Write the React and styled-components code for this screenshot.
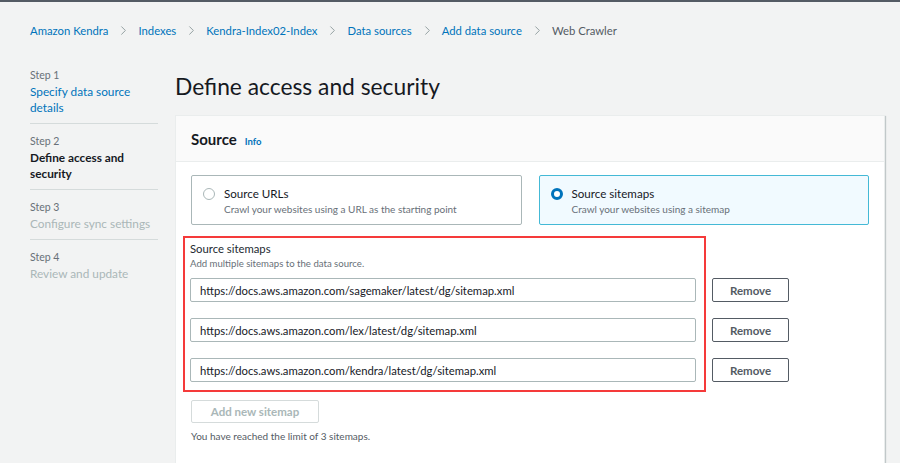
import React from 'react'
import styled, { createGlobalStyle } from 'styled-components'
import { ChevronRight } from 'lucide-react'

const GlobalStyle = createGlobalStyle`
  body {
    margin: 0;
    background: #f2f3f3;
    font-family: Lato, "Noto Sans", sans-serif;
    color: #16191f;
  }
`

const crumbs = ['Amazon Kendra', 'Indexes', 'Kendra-Index02-Index', 'Data sources', 'Add data source']

const steps = [
  { label: 'Step 1', title: 'Specify data source details', state: 'done' },
  { label: 'Step 2', title: 'Define access and security', state: 'current' },
  { label: 'Step 3', title: 'Configure sync settings', state: 'todo' },
  { label: 'Step 4', title: 'Review and update', state: 'todo' },
]

const sitemaps = [
  'https://docs.aws.amazon.com/sagemaker/latest/dg/sitemap.xml',
  'https://docs.aws.amazon.com/lex/latest/dg/sitemap.xml',
  'https://docs.aws.amazon.com/kendra/latest/dg/sitemap.xml',
]

export default function App() {
  return (
    <Page>
      <GlobalStyle />
      <TopBar />
      <Breadcrumbs>
        {crumbs.map((c) => (
          <React.Fragment key={c}>
            <Crumb>{c}</Crumb>
            <Sep><ChevronRight size={15} strokeWidth={1.4} /></Sep>
          </React.Fragment>
        ))}
        <Crumb $current>Web Crawler</Crumb>
      </Breadcrumbs>

      <Layout>
        <Sidebar>
          {steps.map((s) => (
            <Step key={s.label}>
              <StepLabel>{s.label}</StepLabel>
              <StepTitle $state={s.state}>{s.title}</StepTitle>
            </Step>
          ))}
        </Sidebar>

        <Main>
          <Title>Define access and security</Title>
          <Panel>
            <PanelHeader>
              <PanelTitle>Source</PanelTitle>
              <Info>Info</Info>
            </PanelHeader>
            <PanelBody>
              <Tiles>
                <Tile>
                  <Radio />
                  <TileText>
                    <TileTitle>Source URLs</TileTitle>
                    <TileDesc>Crawl your websites using a URL as the starting point</TileDesc>
                  </TileText>
                </Tile>
                <Tile $selected>
                  <Radio $checked />
                  <TileText>
                    <TileTitle>Source sitemaps</TileTitle>
                    <TileDesc>Crawl your websites using a sitemap</TileDesc>
                  </TileText>
                </Tile>
              </Tiles>

              <FieldRow>
                <Highlight>
                  <FieldLabel>Source sitemaps</FieldLabel>
                  <FieldDesc>Add multiple sitemaps to the data source.</FieldDesc>
                  <Inputs>
                    {sitemaps.map((url) => (
                      <Input key={url} readOnly value={url} />
                    ))}
                  </Inputs>
                </Highlight>
                <Buttons>
                  {sitemaps.map((url) => (
                    <RemoveButton key={url}>Remove</RemoveButton>
                  ))}
                </Buttons>
              </FieldRow>

              <AddButton disabled>Add new sitemap</AddButton>
              <Hint>You have reached the limit of 3 sitemaps.</Hint>
            </PanelBody>
          </Panel>
        </Main>
      </Layout>
    </Page>
  )
}

const Page = styled.div`
  width: 900px;
  height: 463px;
  overflow: hidden;
`

const TopBar = styled.div`
  height: 2px;
  background: #545b64;
`

const Breadcrumbs = styled.nav`
  display: flex;
  align-items: center;
  height: 16px;
  padding: 20px 0 0 30px;
  font-size: 11.3px;
`

const Crumb = styled.span`
  color: ${(p) => (p.$current ? '#545b64' : '#0073bb')};
  white-space: nowrap;
`

const Sep = styled.span`
  display: flex;
  color: #879596;
  margin: 0 7px 0 8px;
`

const Layout = styled.div`
  display: flex;
  margin-top: 30px;
`

const Sidebar = styled.aside`
  width: 128px;
  margin-left: 30px;
  flex-shrink: 0;
`

const Step = styled.div`
  padding: 10px 0 7px;
  border-bottom: 1px solid #d5dbdb;
  &:first-child {
    padding-top: 0;
  }
  &:last-child {
    border-bottom: none;
  }
`

const StepLabel = styled.div`
  font-size: 10.5px;
  line-height: 14px;
  color: #687078;
  margin-bottom: 2px;
`

const StepTitle = styled.div`
  font-size: 11.8px;
  line-height: 16px;
  color: ${(p) => (p.$state === 'done' ? '#0073bb' : p.$state === 'current' ? '#16191f' : '#aab7b8')};
  font-weight: ${(p) => (p.$state === 'current' ? 700 : 400)};
`

const Main = styled.main`
  margin-left: 17px;
  width: 710px;
`

const Title = styled.h1`
  margin: 0 0 15px;
  padding-top: 4px;
  font-size: 22.8px;
  font-weight: 400;
  line-height: 28px;
  color: #16191f;
`

const Panel = styled.section`
  background: #fff;
  border: 1px solid #eaeded;
  box-shadow: 1px 1px 1px 0 rgba(0, 28, 36, 0.2);
  height: 360px;
`

const PanelHeader = styled.header`
  display: flex;
  align-items: baseline;
  gap: 8px;
  height: 46px;
  box-sizing: border-box;
  padding: 14px 15px 0;
  background: #fafafa;
  border-bottom: 1px solid #eaeded;
`

const PanelTitle = styled.h2`
  margin: 0;
  font-size: 15px;
  font-weight: 700;
`

const Info = styled.span`
  font-size: 9.5px;
  font-weight: 700;
  color: #0073bb;
`

const PanelBody = styled.div`
  padding: 13px 15px 0;
`

const Tiles = styled.div`
  display: grid;
  grid-template-columns: 1fr 1fr;
  gap: 17px;
`

const Tile = styled.div`
  display: flex;
  align-items: flex-start;
  gap: 9px;
  height: 50px;
  box-sizing: border-box;
  padding: 10px 11px 0;
  border: 1px solid ${(p) => (p.$selected ? '#44b9d6' : '#aab7b8')};
  background: ${(p) => (p.$selected ? '#f1faff' : '#fff')};
  border-radius: 2px;
`

const Radio = styled.span`
  width: ${(p) => (p.$checked ? '6px' : '10px')};
  height: ${(p) => (p.$checked ? '6px' : '10px')};
  margin-top: 2px;
  border-radius: 50%;
  flex-shrink: 0;
  border: ${(p) => (p.$checked ? '3px solid #0073bb' : '1px solid #aab7b8')};
  background: #fff;
`

const TileText = styled.div`
  display: flex;
  flex-direction: column;
`

const TileTitle = styled.span`
  font-size: 11.6px;
  line-height: 16px;
  color: #16191f;
`

const TileDesc = styled.span`
  font-size: 10px;
  line-height: 14px;
  color: #687078;
`

const FieldRow = styled.div`
  display: flex;
  align-items: flex-start;
  gap: 6px;
  margin-top: 11px;
`

const Highlight = styled.div`
  width: 523px;
  box-sizing: border-box;
  margin-left: -8px;
  padding: 3px 8px 8px 5px;
  border: 2px solid #f53a3a;
`

const FieldLabel = styled.div`
  font-size: 11.3px;
  line-height: 16px;
  color: #232a31;
`

const FieldDesc = styled.div`
  font-size: 9.6px;
  line-height: 13px;
  color: #687078;
  margin-bottom: 8px;
`

const Inputs = styled.div`
  display: flex;
  flex-direction: column;
  gap: 16px;
`

const Input = styled.input`
  height: 24px;
  box-sizing: border-box;
  width: 100%;
  padding: 0 9px;
  border: 1px solid #aab7b8;
  border-radius: 2px;
  font-family: inherit;
  font-size: 11.3px;
  color: #16191f;
  outline: none;
`

const Buttons = styled.div`
  display: flex;
  flex-direction: column;
  gap: 16px;
  padding-top: 42px;
`

const RemoveButton = styled.button`
  width: 77px;
  height: 24px;
  border: 1px solid #545b64;
  border-radius: 2px;
  background: #fff;
  color: #545b64;
  font-family: inherit;
  font-weight: 700;
  font-size: 11.5px;
`

const AddButton = styled.button`
  display: block;
  margin-top: 8px;
  width: 128px;
  height: 23px;
  border: 1px solid #d5dbdb;
  border-radius: 2px;
  background: #fff;
  color: #aab7b8;
  font-family: inherit;
  font-weight: 700;
  font-size: 11.5px;
`

const Hint = styled.div`
  margin-top: 6px;
  font-size: 10px;
  line-height: 14px;
  color: #545b64;
`
